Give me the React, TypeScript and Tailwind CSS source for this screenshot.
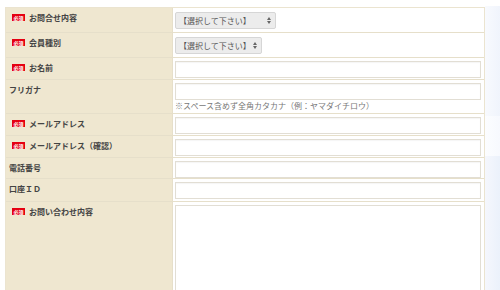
import React from "react";

const Badge = () => (
  <span className="inline-flex items-center justify-center w-[13px] h-[7px] bg-[#e50012] text-white text-[5px] leading-none font-bold mr-[4px] ml-[3px] mt-[1px] shrink-0">
    必須
  </span>
);

const SelectBox = ({ w }: { w: string }) => (
  <div className={`${w} h-[17px] flex items-center justify-between border border-[#d6d6d6] rounded-[2px] bg-[#ececec] pl-[3px] pr-[4px]`}>
    <span className="text-[8px] text-[#555] leading-none">【選択して下さい】</span>
    <svg width="4" height="7" viewBox="0 0 4 7">
      <path d="M0 3 L2 0 L4 3 Z" fill="#666" />
      <path d="M0 4 L2 7 L4 4 Z" fill="#666" />
    </svg>
  </div>
);

const Input = () => (
  <div className="w-[306px] h-[17px] border border-[#e2ded4] bg-white shadow-[inset_0_1px_1px_rgba(0,0,0,0.04)]" />
);

type Row = {
  label: string;
  req: boolean;
  h: string;
  content: React.ReactNode;
};

export default function App() {
  const rows: Row[] = [
    { label: "お問合せ内容", req: true, h: "h-[25px]", content: <div className="pt-[4px]"><SelectBox w="w-[101px]" /></div> },
    { label: "会員種別", req: true, h: "h-[25px]", content: <div className="pt-[4px]"><SelectBox w="w-[87px]" /></div> },
    { label: "お名前", req: true, h: "h-[22px]", content: <div className="pt-[3px]"><Input /></div> },
    {
      label: "フリガナ",
      req: false,
      h: "h-[34px]",
      content: (
        <div className="pt-[3px]">
          <Input />
          <div className="text-[8px] leading-none text-[#777] mt-[2px]">※スペース含めず全角カタカナ（例：ヤマダイチロウ）</div>
        </div>
      ),
    },
    { label: "メールアドレス", req: true, h: "h-[22px]", content: <div className="pt-[3px]"><Input /></div> },
    { label: "メールアドレス（確認）", req: true, h: "h-[22px]", content: <div className="pt-[3px]"><Input /></div> },
    { label: "電話番号", req: false, h: "h-[21px]", content: <div className="pt-[3px]"><Input /></div> },
    { label: "口座ＩＤ", req: false, h: "h-[23px]", content: <div className="pt-[3px]"><Input /></div> },
  ];

  return (
    <div
      className="w-[500px] h-[290px] overflow-hidden bg-white flex"
      style={{ fontFamily: '"Noto Sans CJK JP", "Noto Sans", sans-serif' }}
    >
      <div className="w-[485px] pl-[5px] pt-[7px] shrink-0">
        <div className="w-[480px] border-t border-l border-r border-[#ebe4d0]">
          {rows.map((r, i) => (
            <div key={i} className={`flex ${r.h} border-b border-[#e6dfca]`}>
              <div className="w-[167px] bg-[#efe7d0] flex items-start pt-[5px] pl-[3px] border-r border-[#e6dfca]">
                {r.req ? <Badge /> : null}
                <span className="text-[8px] leading-[9px] font-bold text-[#444] whitespace-nowrap">{r.label}</span>
              </div>
              <div className="flex-1 bg-white pl-[2px]">{r.content}</div>
            </div>
          ))}
          <div className="flex h-[100px]">
            <div className="w-[167px] bg-[#efe7d0] flex items-start pl-[3px] pt-[5px] border-r border-[#e6dfca]">
              <Badge />
              <span className="text-[8px] leading-[9px] font-bold text-[#444] whitespace-nowrap">お問い合わせ内容</span>
            </div>
            <div className="flex-1 bg-white pl-[2px] pt-[3px]">
              <div className="w-[306px] h-[120px] border border-[#e2ded4] bg-white" />
            </div>
          </div>
        </div>
      </div>
      <div className="flex-1 flex flex-col">
        <div className="h-[6px] bg-white" />
        <div className="h-[110px] bg-gradient-to-r from-[#f8fafe] to-[#f0f4fc]" />
        <div className="h-[40px] bg-gradient-to-r from-[#fcfdff] to-[#f7f9fe]" />
        <div className="flex-1 bg-gradient-to-r from-[#f5f7fd] to-[#ebf1fb]" />
      </div>
    </div>
  );
}
